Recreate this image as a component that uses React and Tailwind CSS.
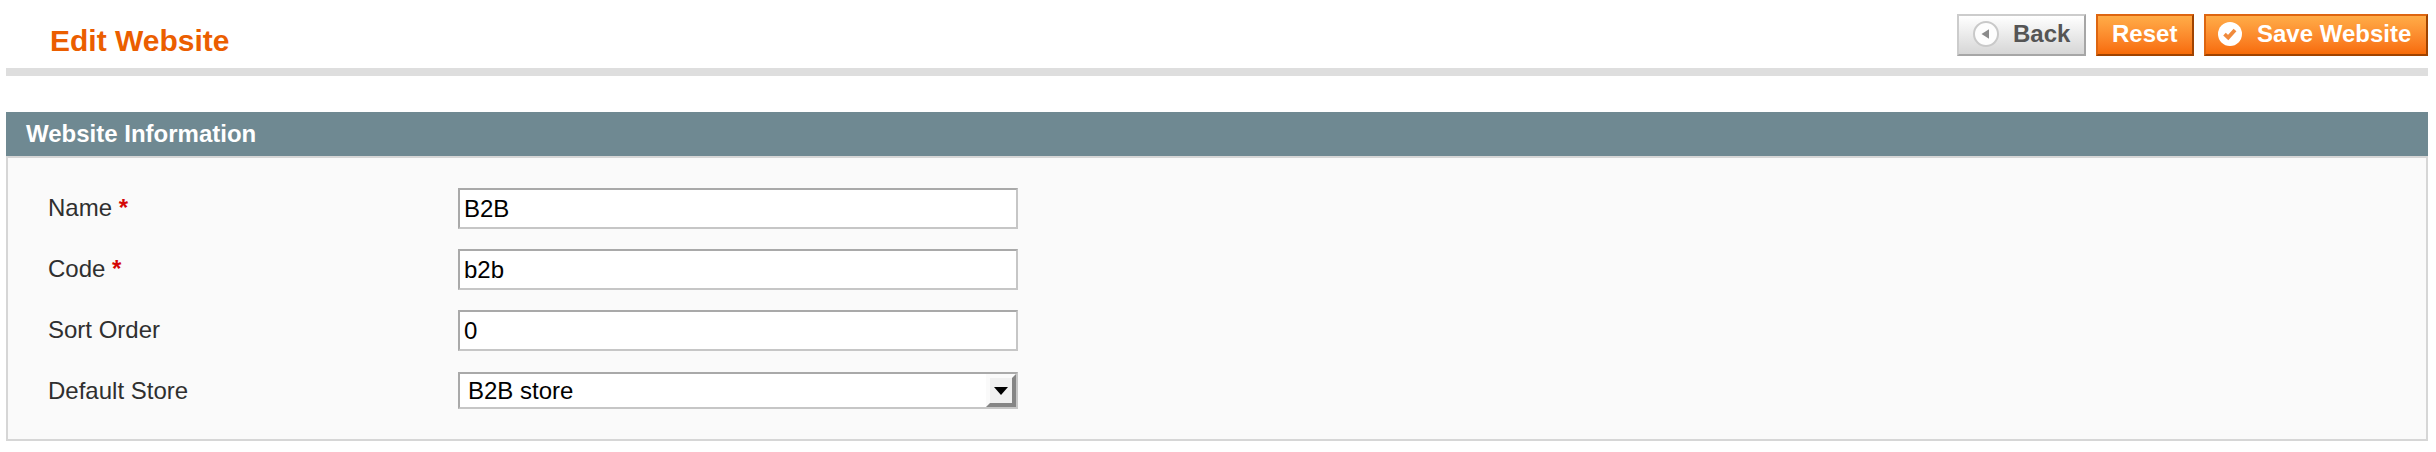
const field =
  'block w-[560px] border-2 border-t-[#a9a9a9] border-l-[#a9a9a9] border-r-[#c6c6c6] border-b-[#c6c6c6] bg-white text-[24px] leading-[28px] text-black outline-none';

const orange =
  'flex h-[42px] items-start border-2 border-t-[#de6610] border-l-[#de6610] border-r-[#a04300] border-b-[#a04300] bg-linear-to-b from-[#ffac47] to-[#f76b07] pt-[4px] font-bold leading-[28px] text-white';

function BackIcon() {
  return (
    <svg className="mt-[1px] h-[26px] w-[26px] shrink-0" viewBox="0 0 26 26">
      <circle cx="13" cy="13" r="12" fill="#fdfdfd" stroke="#c9c9c9" strokeWidth="2" />
      <path d="M8.5 13L16 8.3V17.7Z" fill="#8b8b8b" />
    </svg>
  );
}

function SaveIcon() {
  return (
    <svg className="mt-[2px] h-6 w-6 shrink-0" viewBox="0 0 24 24">
      <circle cx="12" cy="12" r="12" fill="#fff" />
      <path d="M6.5 12.2L10.2 15.6L17 8" fill="none" stroke="#f08a3c" strokeWidth="3.8" />
    </svg>
  );
}

function Row({ label, required, children }) {
  return (
    <div className="flex h-[61px] items-start">
      <label className="w-[410px] shrink-0 pt-[6px] text-[#2f2f2f]">
        {label}
        {required && <span className="font-bold text-[#d40707]"> *</span>}
      </label>
      {children}
    </div>
  );
}

export default function App() {
  return (
    <main className="h-[452px] w-[2436px] bg-white pl-[6px] pr-[8px] font-['Liberation_Sans',Arial,sans-serif] text-[24px] leading-[28px]">
      <header className="flex h-[76px] items-start justify-between border-b-8 border-[#dedede]">
        <h1 className="pl-[44px] pt-[23px] text-[30px] font-bold leading-[36px] text-[#eb5e00]">Edit Website</h1>
        <div className="flex gap-[10px] pt-[14px]">
          <button className="flex h-[42px] w-[129px] items-start border-2 border-t-[#cccccc] border-l-[#cccccc] border-r-[#a6a6a6] border-b-[#a6a6a6] bg-linear-to-b from-white to-[#d6d6d6] pl-[14px] pt-[4px] font-bold leading-[28px] text-[#555555]">
            <BackIcon />
            <span className="ml-[14px]">Back</span>
          </button>
          <button className={orange + ' w-[98px] pl-[14px]'}>Reset</button>
          <button className={orange + ' w-[224px] pl-[12px]'}>
            <SaveIcon />
            <span className="ml-[15px] whitespace-nowrap">Save Website</span>
          </button>
        </div>
      </header>

      <section className="mt-[36px]">
        <h2 className="h-[44px] bg-[#6f8992] pl-[20px] pt-[8px] font-bold text-white">Website Information</h2>
        <div className="h-[285px] border-2 border-[#d6d6d6] bg-[#fafafa] pl-[40px] pt-[30px]">
          <Row label="Name" required>
            <input className={field + ' h-[41px] px-[4px]'} defaultValue="B2B" />
          </Row>
          <Row label="Code" required>
            <input className={field + ' h-[41px] px-[4px]'} defaultValue="b2b" />
          </Row>
          <Row label="Sort Order">
            <input className={field + ' h-[41px] px-[4px]'} defaultValue="0" />
          </Row>
          <Row label="Default Store">
            <div className={field + ' mt-px flex h-[37px] justify-between pl-[8px]'}>
              <span className="pt-[3px]">B2B store</span>
              <span className="flex h-[33px] w-[30px] items-center justify-center border-4 border-t-[#fafafa] border-l-[#fafafa] border-r-[#858585] border-b-[#858585] bg-[#f0f0f0]">
                <svg className="h-[8px] w-[14px] shrink-0" viewBox="0 0 14 8">
                  <path d="M0 0H14L7 8Z" fill="#000" />
                </svg>
              </span>
            </div>
          </Row>
        </div>
      </section>
    </main>
  );
}
